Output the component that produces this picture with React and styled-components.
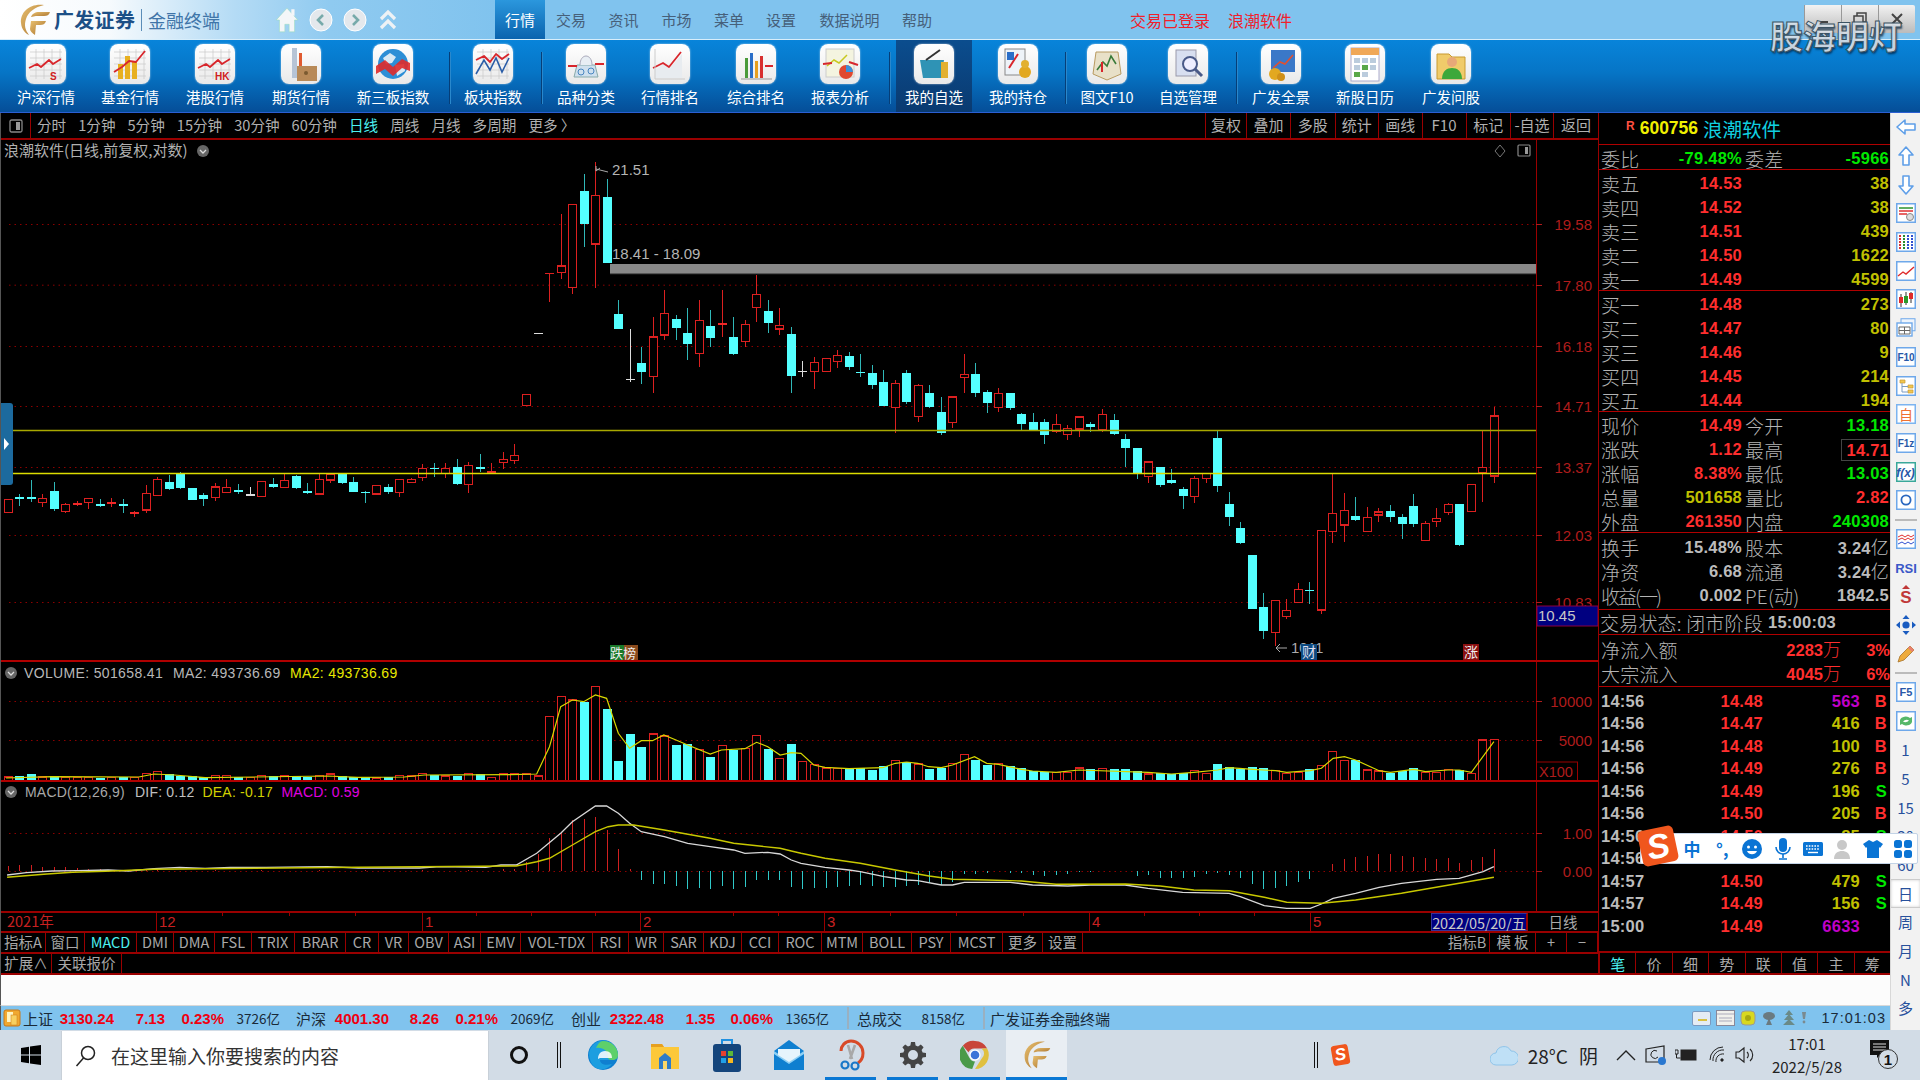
import React from 'react';
import styled, { createGlobalStyle } from 'styled-components';

const CJK = '"Noto Sans CJK SC", "Liberation Sans", sans-serif';
const LAT = '"Liberation Sans", "Noto Sans CJK SC", sans-serif';
const LINE = '#9a0000';

const Global = createGlobalStyle`
  html, body { margin: 0; padding: 0; background: #000; }
  * { box-sizing: border-box; }
`;

const Page = styled.div`
  position: relative; width: 1920px; height: 1080px; overflow: hidden;
  display: flex; flex-direction: column; font-family: ${LAT};
`;

/* ---------- top bar ---------- */
const TopBar = styled.header`
  height: 40px; flex: none; display: flex; align-items: stretch; background: #80c3ee;
  border-bottom: 1px solid #d8eefb;
`;
const LogoArea = styled.div`
  width: 495px; display: flex; align-items: center; padding-left: 18px;
  background: linear-gradient(90deg, #fff 0, #f6fafd 110px, #b4dbf5 235px, #8fcaf0 330px, #80c3ee 495px);
`;
const LogoName = styled.span`
  font: 700 20px ${CJK}; color: #1c4f86; margin-left: 2px; letter-spacing: .3px; width: 84px; white-space: nowrap;
`;
const LogoSub = styled.span`
  font: 400 18px ${CJK}; color: #3f75a8; border-left: 1px solid #5b8db8; padding-left: 6px; margin-left: 3px; line-height: 22px; white-space: nowrap;
`;
const NavIcons = styled.div`
  display: flex; gap: 10px; margin-left: 55px; align-items: center;
`;
const NavItem = styled.div`
  width: ${p => p.$w}px; display: flex; align-items: center; justify-content: center;
  font: 400 15px ${CJK}; color: ${p => (p.$on ? '#fff' : '#46607a')};
  background: ${p => (p.$on ? 'linear-gradient(180deg,#2b97dd,#0a63ae)' : 'none')};
`;
const LoginText = styled.span`
  font: 400 16px ${CJK}; color: #f0202a; align-self: center; white-space: nowrap; margin-left: ${p => p.$m}px;
`;
const WinControls = styled.div`
  position: absolute; top: 5px; left: 1804px; width: 111px; height: 28px; display: flex;
  background: linear-gradient(180deg, #f2f2f2, #bbb); border-radius: 2px;
`;
const WinBtn = styled.div`
  flex: 1; border-left: 1px solid #999; display: flex; align-items: center; justify-content: center;
`;
const Watermark = styled.div`
  position: absolute; top: 11px; left: 1770px; font: 700 33px ${CJK}; color: rgba(226,232,238,.88);
  letter-spacing: 0; white-space: nowrap;
  -webkit-text-stroke: 1px #3b5363; text-shadow: 1px 2px 2px rgba(0,30,60,.7);
`;

/* ---------- tool bar ---------- */
const ToolBar = styled.nav`
  height: 73px; flex: none; display: flex; padding-left: 4px;
  background: linear-gradient(180deg, #0884da 0, #0675c6 45%, #054e98 100%);
  border-bottom: 1px solid #2b5fd2;
`;
const Tool = styled.div`
  width: ${p => p.$w}px; display: flex; flex-direction: column; align-items: center; padding-top: 4px;
  background: ${p => (p.$on ? 'linear-gradient(180deg,#0b4d8e,#0a3a70)' : 'none')};
`;
const ToolTile = styled.div`
  width: 40px; height: 40px; border-radius: 8px; background: linear-gradient(180deg,#fff,#e9e9e9);
  box-shadow: 0 0 2px rgba(255,255,255,.7); overflow: hidden; display: flex;
`;
const ToolLabel = styled.span`
  margin-top: 3px; font: 400 14.5px/20px ${CJK}; color: #fff; white-space: nowrap;
`;
const ToolSep = styled.div`
  width: 1px; flex: none; margin: 12px ${p => p.$r}px 8px ${p => p.$l}px; background: #053e78; box-shadow: 1px 0 0 #2a88cc;
`;

/* ---------- body ---------- */
const Body = styled.div`
  flex: 1; display: flex; min-height: 0;
`;
const Workspace = styled.div`
  width: 1890px; display: flex; flex-direction: column;
`;
const Terminal = styled.div`
  height: 862px; flex: none; display: flex; background: #000; border-left: 1px solid #555;
`;
const ChartCol = styled.div`
  position: relative; width: 1597px; display: flex; flex-direction: column; border-bottom: 2px solid ${LINE};
`;
const PeriodBar = styled.div`
  height: 27px; flex: none; display: flex; align-items: stretch; border-bottom: 2px solid ${LINE};
`;
const PaneToggle = styled.div`
  width: 30px; border-right: 1px solid ${LINE}; display: flex; align-items: center; justify-content: center;
`;
const PeriodList = styled.div`
  display: flex; gap: 12px; padding: 0 0 2px 6px; align-items: center;
`;
const Period = styled.span`
  font: 400 14.6px ${CJK}; color: ${p => (p.$on ? '#4cf0f0' : '#b0b0b0')}; white-space: nowrap;
`;
const Actions = styled.div`
  margin-left: auto; display: flex;
`;
const ActionCell = styled.div`
  width: ${p => p.$w}px; border-left: 1px solid ${LINE}; display: flex; align-items: center; justify-content: center; padding-bottom: 2px;
  font: 400 15px ${CJK}; color: #b0b0b0; white-space: nowrap;
`;
const Pane = styled.div`
  height: ${p => p.$h}px; flex: none; display: flex;
`;
const Handle = styled.div`
  position: absolute; left: 0; top: 290px; width: 12px; height: 82px; background: #1c6a9e; border-radius: 0 3px 3px 0;
  display: flex; align-items: center; justify-content: flex-start; padding-left: 3px;
`;
const HandleArrow = styled.span`
  width: 0; height: 0; border-left: 5px solid #fff; border-top: 6px solid transparent; border-bottom: 6px solid transparent;
`;
const DateRow = styled.div`
  height: 20px; flex: none; display: flex; border-top: 2px solid ${LINE};
`;
const DateCell = styled.div`
  width: 97px; background: #000080; border: 1px solid #33339a; border-right: 2px solid ${LINE}; display: flex; align-items: center; justify-content: center;
  font: 400 14.5px ${CJK}; color: #c8c8c8; white-space: nowrap; letter-spacing: -.2px;
`;
const DayCell = styled.div`
  flex: 1; display: flex; align-items: center; justify-content: center; font: 400 14.5px ${CJK}; color: #aaa; padding-bottom: 1px;
`;
const CellRow = styled.div`
  height: ${p => p.$h}px; flex: none; display: flex; border-top: 2px solid ${LINE};
`;
const Cell = styled.div`
  width: ${p => p.$w}px; flex: none; border-right: 1px solid ${LINE}; display: flex; align-items: center; justify-content: center; padding-bottom: 2px;
  font: 400 14.5px ${CJK}; color: ${p => (p.$on ? '#4cf0f0' : '#a8a8a8')}; white-space: nowrap;
  ${p => p.$push && 'margin-left: auto;'}
`;

/* ---------- quote panel ---------- */
const Quote = styled.aside`
  width: 292px; flex: none; display: flex; flex-direction: column; border-left: 1px solid ${LINE}; border-bottom: 2px solid ${LINE};
`;
const QuoteHead = styled.div`
  height: 32px; flex: none; display: flex; align-items: center; padding-left: 27px; border-bottom: 1px solid #b00000;
`;
const RBadge = styled.span`
  font: 700 12px ${LAT}; color: #ff5040; align-self: flex-start; margin-top: 6px;
`;
const Code = styled.span`
  font: 700 17.5px ${LAT}; color: #f0f000; margin-left: 5px;
`;
const StockName = styled.span`
  font: 400 19.5px ${CJK}; color: #10d0e0; margin-left: 5px;
`;
const Section = styled.div`
  display: flex; flex-direction: column; flex: none; border-bottom: 1px solid #b00000;
  padding-top: ${p => p.$pt || 0}px; padding-bottom: ${p => p.$pb || 0}px;
`;
const Row = styled.div`
  height: 24px; display: grid; grid-template-columns: 144px 147px;
`;
const Half = styled.div`
  display: flex; align-items: center; justify-content: space-between; padding: 0 1px 0 2px;
`;
const Label = styled.span`
  font: 300 19px ${CJK}; color: #b4b4b4; white-space: nowrap; letter-spacing: ${p => (p.$tight ? '-2px' : '.2px')};
`;
const Num = styled.span`
  font: 700 16.5px ${LAT}; color: ${p => p.$c}; white-space: nowrap; letter-spacing: .25px;
  ${p => p.$box && 'border: 1px solid #444; padding: 0 1px 0 4px; margin: -1px -2px -1px 0; line-height: 20px;'}
`;
const Unit = styled.span`
  font: 300 18px/18px ${CJK};
`;
const StateRow = styled.div`
  height: 24px; display: flex; align-items: center; padding-left: 1px; gap: 5px;
`;
const FlowRow = styled.div`
  height: 24px; display: grid; grid-template-columns: 96px 144px 49px; align-items: center; padding-left: 2px;
`;
const FlowVal = styled.span`
  font: 700 16.5px/20px ${LAT}; color: #ff2e2e; text-align: right; white-space: nowrap;
`;
const Ticks = styled.div`
  flex: 1; padding-top: 3px; display: flex; flex-direction: column;
`;
const Tick = styled.div`
  height: 22.5px; flex: none; display: grid; grid-template-columns: 60px 102px 97px 27px; align-items: center; padding-left: 2px;
`;
const TickVal = styled.span`
  font: 700 16.5px ${LAT}; color: ${p => p.$c}; text-align: ${p => p.$a || 'right'}; letter-spacing: .25px; white-space: nowrap;
`;
const QuoteTabs = styled.div`
  height: 22px; flex: none; display: flex; border-top: 2px solid ${LINE};
`;
const QuoteTab = styled.div`
  flex: 1; display: flex; align-items: center; justify-content: center; border-left: 1px solid ${LINE};
  font: 400 15px ${CJK}; color: ${p => (p.$on ? '#4cf0f0' : '#aaa')};
`;

/* ---------- sidebar ---------- */
const Sidebar = styled.aside`
  width: 30px; flex: none; background: #f2f2f2; display: flex; flex-direction: column; align-items: center; border-left: 1px solid #d8d8d8;
`;
const SideItem = styled.div`
  width: 100%; height: 28.7px; flex: none; display: flex; align-items: center; justify-content: center;
  font: 400 ${p => p.$fs || 14}px ${CJK}; color: #27509c;
  ${p => p.$on && 'background:#fff;border:1px solid #ccc;border-width:1px 0;box-shadow:inset 0 0 3px #ccc;'}
`;
const SideSep = styled.div`
  width: 22px; height: 10px; flex: none; display: flex; align-items: center; &::before { content: ''; width: 100%; height: 2px; background: #bbb; }
`;

/* ---------- lower bands ---------- */
const Blank = styled.div`
  height: 31px; flex: none; background: #fcfcfc; border-left: 1px solid #555; border-bottom: 1px solid #d8d8d8;
`;
const StatusBar = styled.footer`
  height: 24px; flex: none; background: #80c3ee; display: flex; align-items: center; padding-left: 2px;
  border-left: 1px solid #555;
`;
const StatusName = styled.span`
  font: 400 15px ${CJK}; color: #1a2a38; margin-left: ${p => p.$m}px; white-space: nowrap;
`;
const StatusNum = styled.span`
  font: 700 15px ${LAT}; color: #f00010; width: ${p => p.$w}px; text-align: right; flex: none; white-space: nowrap;
`;
const StatusAmt = styled.span`
  font: 400 13.5px ${CJK}; color: #1a2a38; width: ${p => p.$w}px; text-align: right; flex: none; white-space: nowrap;
`;
const StatusSep = styled.span`
  width: 2px; height: 22px; background: #9ab0c0; margin: 0 ${p => p.$r}px 0 ${p => p.$l}px; flex: none;
`;
const StatusRight = styled.div`
  margin-left: auto; display: flex; align-items: center; gap: 5px; padding-right: 4px;
`;
const Clock = styled.span`
  font: 400 14.5px ${LAT}; color: #1a2a38; letter-spacing: 1px; margin-left: 10px;
`;

/* ---------- task bar ---------- */
const TaskBar = styled.div`
  height: 50px; flex: none; background: #d2dce6; display: flex; align-items: stretch;
`;
const StartBtn = styled.div`
  width: 61px; display: flex; align-items: center; justify-content: center; flex: none;
`;
const SearchBox = styled.div`
  width: 428px; flex: none; background: #fff; margin-top: 1px; display: flex; align-items: center; padding-left: 12px; gap: 13px;
  border: 1px solid #c8d0d8; border-width: 0 1px;
`;
const SearchText = styled.span`
  font: 400 19px ${CJK}; color: #333; white-space: nowrap;
`;
const TaskIcon = styled.div`
  position: relative; width: ${p => p.$w}px; flex: none; margin-left: ${p => p.$m || 0}px; display: flex; align-items: center; justify-content: center;
  ${p => p.$u && `&::after { content: ''; position: absolute; bottom: 0; height: 3px; background: #0a78d4; left: ${p.$on ? 0 : 5}px; right: ${p.$on ? 0 : 6}px; }`}
  ${p => p.$on && 'background: #e9eef3;'}
`;
const Tray = styled.div`
  margin-left: auto; display: flex; align-items: center;
`;
const Weather = styled.span`
  font: 400 19px ${CJK}; color: #222; white-space: nowrap; margin-left: ${p => p.$l}px;
`;
const TrayClock = styled.div`
  width: 94px; display: flex; flex-direction: column; align-items: center; font: 400 15px/23px ${CJK}; color: #222; margin-left: 5px;
`;
const Ime = styled.div`
  position: absolute; left: 1640px; top: 833px; width: 278px; height: 31px; background: #fff; border: 1px solid #c3d3e6; border-radius: 2px;
  display: flex; align-items: center; padding-left: 36px;
`;
const ImeLogo = styled.div`
  position: absolute; left: -1px; top: -6px; width: 36px; height: 36px; background: #f0561d; border-radius: 5px; transform: rotate(-12deg);
  display: flex; align-items: center; justify-content: center; font: italic 900 34px/34px ${LAT}; color: #fff;
`;
const ImeSlot = styled.div`
  width: 30.2px; flex: none; display: flex; justify-content: center; align-items: center; font: 700 17px ${CJK}; color: #0a74d4;
`;
const MiniS = styled.div`
  width: 17px; height: 20px; background: #f0561d; border-radius: 3px; transform: rotate(-10deg); color: #fff; font: italic 900 17px/20px ${LAT}; text-align: center;
`;

/* ---------- candle data [type, wickTop, bodyTop, bodyBottom, wickBottom] (zoomed y) ---------- */
const A = `r 1078 1078 1118 1118|c 1063 1070 1077 1097|c 1021 1070 1078 1085|r 1063 1075 1088 1100|c 1025 1052 1107 1112|r 1090 1094 1114 1118|R 1082 1090 1095 1097|r 1074 1076 1088 1107|c 1078 1092 1098 1102|R 1075 1086 1092 1100|c 1078 1092 1097 1118|R 1112 1115 1122 1130|r 1036 1060 1110 1118|r 1010 1018 1066 1068|c 1005 1025 1047 1050|c 995 1002 1043 1047|c 1044 1044 1080 1080|c 1060 1064 1077 1097|r 1030 1041 1073 1082|r 1018 1042 1057 1060|c 1032 1050 1055 1063|w 1040 1063 1067 1067|r 1025 1025 1070 1070|c 1015 1032 1040 1045|r 1002 1022 1043 1045|c 1004 1007 1043 1046|c 1030 1052 1058 1062|r 1002 1018 1062 1063|r 1000 1004 1020 1028|c 1000 1002 1028 1032|c 1012 1025 1055 1055|c 1052 1056 1060 1088|r 1037 1037 1062 1062|c 1033 1040 1055 1063|r 1018 1018 1058 1070|r 1015 1018 1027 1030|r 972 985 1013 1022|c 968 984 988 1010|r 968 985 1000 1014|c 958 980 1032 1035|r 965 977 1034 1058|c 942 981 988 995|R 968 993 1000 1000|r 936 958 968 987|r 912 947 961 972|r 763 763 796 796|w 580 579 581 581|R 400 400 402 485|r 222 378 397 417|r 193 193 443 462|c 102 152 252 320|r 65 167 312 443|c 118 170 368 368|c 480 523 567 568|w 568 716 718 727|c 622 669 695 732|r 530 591 709 758|r 450 520 585 600|c 525 538 563 600|c 503 580 612 660|r 480 542 640 682|c 510 557 593 620|R 450 549 556 592|c 530 590 642 645|r 540 553 604 622|r 405 463 502 547|c 480 512 548 578|r 503 557 567 585|c 560 583 708 758`;
const B = `w 362 394 396 410|r 350 367 394 447|r 355 355 395 395|r 330 347 364 385|c 335 347 380 390|c 343 396 399 410|c 376 399 435 447|c 390 425 497 497|r 420 430 502 578|c 390 399 485 492|r 432 437 530 545|c 435 460 500 505|c 470 516 578 585|r 468 471 548 565|r 343 403 413 458|c 368 403 458 470|c 450 455 488 518|r 445 460 503 515|c 460 460 503 510|c 520 522 553 570|c 518 545 570 570|c 538 545 585 612|r 522 553 574 578|r 555 565 584 600|r 530 531 567 590|c 545 553 560 575|r 507 523 570 575|c 522 541 582 585|c 582 598 624 680|c 624 624 700 717|r 665 666 710 728|c 680 680 736 740|c 687 721 728 732|c 740 748 769 807|r 708 715 770 788|r 700 700 716 728|c 570 594 738 755|c 755 793 830 857|c 845 865 908 912|c 946 946 1108 1108|c 1060 1100 1174 1197|r 1082 1082 1178 1218|r 1078 1112 1130 1137|r 1030 1048 1088 1090|c 1025 1050 1054 1092|r 870 872 1110 1122|r 700 820 874 908|r 760 812 855 905|c 770 827 841 842|r 800 832 874 875|r 805 816 825 845|c 796 812 830 845|c 822 831 852 897|c 762 797 851 862|r 842 851 901 902|r 805 835 845 862|r 790 793 818 825|c 793 793 916 918|r 733 733 815 815|r 570 682 697 785|r 500 528 708 728`;
const parse = (s, off) => s.split('|').map(e => {
  const p = e.split(' ');
  return { t: p[0], wt: p[1] / 3 + off, bt: p[2] / 3 + off, bb: p[3] / 3 + off, wb: p[4] / 3 + off };
});
const CANDLES = [...parse(A, 0), ...parse(B, 100)];
const xAt = i => 6.6 + 11.52 * i;

const VOL = [381,377,372,381,378,383,383,383,383,383,382,383,370,365,372,377,378,382,376,376,382,383,377,378,378,377,382,377,372,378,382,382,384,380,377,378,370,375,378,378,370,373,382,370,371,372,378,200,140,150,155,110,178,334,252,290,252,258,286,283,298,320,287,300,296,256,297,325,283,335,343,354,355,355,355,360,347,332,337,342,358,355,340,313,330,345,340,347,355,363,366,367,368,354,358,355,358,358,362,372,368,373,370,362,370,343,350,358,350,355,362,370,368,358,347,305,332,330,360,363,368,362,355,367,367,358,360,370,270,268];

const MA_L = [[10,384],[100,380],[270,381],[300,372],[340,375],[400,383],[640,378],[700,382],[790,381],[830,375],[1000,374],[1050,372],[1075,290],[1097,170],[1120,150],[1142,155],[1165,135],[1187,145],[1210,250],[1232,295],[1255,272],[1277,272],[1299,255],[1323,270],[1346,285],[1390,312],[1412,300],[1458,296],[1481,277],[1503,290],[1527,315],[1549,308]];
const MA_R = [[0,310],[25,345],[47,352],[94,356],[160,353],[185,340],[207,336],[229,340],[250,350],[275,353],[297,345],[340,320],[364,340],[387,343],[432,358],[454,363],[500,367],[545,360],[680,367],[726,372],[770,367],[817,360],[839,353],[886,358],[930,362],[952,367],[998,362],[1020,355],[1043,325],[1065,320],[1087,330],[1133,362],[1155,367],[1201,358],[1224,365],[1268,360],[1290,360],[1314,367],[1358,275]];
const DIF_L = [[12,675],[50,668],[100,663],[150,662],[210,660],[250,663],[300,656],[350,652],[400,655],[450,652],[520,652],[640,650],[700,654],[820,654],[860,650],[950,652],[980,645],[1010,645],[1050,610],[1097,550],[1120,515],[1165,468],[1187,468],[1210,490],[1232,520],[1255,545],[1300,560],[1346,580],[1390,590],[1436,600],[1458,610],[1503,607],[1527,612],[1549,630]];
const DIF_R = [[0,640],[47,652],[94,660],[116,665],[163,680],[207,690],[229,692],[275,705],[297,705],[320,697],[364,697],[410,697],[454,705],[523,708],[567,705],[635,705],[680,715],[748,727],[839,730],[861,740],[908,767],[952,775],[998,775],[1020,762],[1043,745],[1087,730],[1133,712],[1177,700],[1246,688],[1290,685],[1337,665],[1358,650]];
const DEA_L = [[12,682],[90,672],[140,667],[205,664],[300,658],[400,656],[700,652],[1010,648],[1050,635],[1075,625],[1120,585],[1165,545],[1190,530],[1210,525],[1240,525],[1300,540],[1390,565],[1436,580],[1527,595],[1549,603]];
const DEA_R = [[0,610],[47,625],[116,640],[185,660],[251,678],[297,688],[364,690],[432,693],[500,703],[636,702],[704,708],[770,720],[839,722],[908,742],[952,757],[1020,760],[1087,750],[1177,730],[1290,700],[1358,682]];
const pts = (l, r, dy) => [...l.map(([x, y]) => `${(x / 1.96).toFixed(1)},${(y / 3 + dy).toFixed(1)}`), ...r.map(([x, y]) => `${(800 + x / 1.96).toFixed(1)},${(y / 3 + dy).toFixed(1)}`)].join(' ');

const MACD_BARS = [
  [0,648],[1,645],[2,645],[3,650],[4,652],[5,650],[6,655],[7,657],[8,658],[9,660],[10,660],[11,661],[12,660],[13,660],[18,660],[22,660],[27,660],[31,660],[36,659],[40,660],[43,658],[44,657],
  [45,635],[46,612],[47,565],[48,550],[49,510],[50,508],[51,500],[52,540],[53,597],[54,658],
  [55,690],[56,703],[57,702],[58,707],[59,717],[60,713],[61,717],[62,708],[63,717],[64,710],[65,691],[66,691],[67,690],[68,710],
  [69,717],[70,715],[71,715],[72,710],[73,707],[74,705],[75,708],[76,710],[77,712],[78,707],[79,705],[80,697],[81,705],[82,695],[83,673],[84,673],[85,670],[87,668],[88,670],[89,675],[90,678],[91,675],[92,672],[93,667],[94,665],[98,677],[99,676],[100,683],[101,683],[102,683],[103,680],[104,672],[105,668],[106,675],[107,683],[108,703],[109,717],[110,715],[111,708],[112,695],[113,688],
  [115,642],[116,628],[117,620],[118,617],[119,613],[120,613],[121,617],[122,620],[123,625],[124,628],[125,625],[126,640],[127,630],[128,620],[129,598],
];

const RED = '#dc2020';
const CYAN = '#54ffff';
const AX = '#b01c1c';

const Grid = ({ ys }) => ys.map(y => (
  <line key={y} x1="8" x2="1535" y1={y + .5} y2={y + .5} stroke="#8c0000" strokeDasharray="1.5 4" />
));
const AxisMark = ({ y, t }) => (
  <g>
    <line x1="1535" x2="1541" y1={y + .5} y2={y + .5} stroke={AX} />
    <text x="1591" y={y + 5.5} textAnchor="end" fontSize="15" fill={AX} fontFamily={LAT}>{t}</text>
  </g>
);
const Chev = ({ x, y }) => (
  <g>
    <circle cx={x} cy={y} r="6" fill="#666" />
    <path d={`M${x - 3} ${y - 1}l3 3 3-3`} fill="none" stroke="#ddd" strokeWidth="1.3" />
  </g>
);

function Candle({ c, i }) {
  const x = Math.round(xAt(i));
  const col = c.t === 'c' ? '#2fb8b8' : c.t === 'w' ? '#ddd' : RED;
  const h = Math.max(1, c.bb - c.bt);
  return (
    <g shapeRendering="crispEdges">
      <line x1={x + .5} x2={x + .5} y1={c.wt} y2={c.wb} stroke={col} />
      {c.t === 'c' && <rect x={x - 4} y={c.bt} width="9" height={h} fill={CYAN} />}
      {c.t === 'r' && <rect x={x - 3.5} y={c.bt} width="8" height={h} fill="#000" stroke={RED} strokeWidth="1.2" />}
      {c.t === 'R' && <rect x={x - 4} y={c.bt} width="9" height={h} fill={i === 47 ? RED : '#f02828'} />}
      {c.t === 'w' && <rect x={x - 4} y={c.bt} width="9" height={h} fill="#ddd" />}
    </g>
  );
}

function MainChart() {
  return (
    <svg width="1597" height="522" viewBox="0 0 1597 522" style={{ display: 'block' }}>
      <Grid ys={[84, 144.7, 206, 266, 327, 395, 462]} />
      <rect x="609" y="124" width="926" height="10" fill="#888" />
      <rect x="609" y="133" width="926" height="1.2" fill="#555" />
      {CANDLES.map((c, i) => <Candle key={i} c={c} i={i} />)}
      <line x1="12" x2="1535" y1="290.5" y2="290.5" stroke="#a8a800" strokeWidth="1.3" />
      <line x1="12" x2="1535" y1="333.5" y2="333.5" stroke="#dcdc00" strokeWidth="1.3" />
      <path d="M595 29l12 3M595 26v5l4-3" fill="none" stroke="#aaa" />
      <text x="611" y="35" fontSize="15" fill="#b4b4b4" fontFamily={LAT}>21.51</text>
      <text x="611" y="119" fontSize="15" fill="#b4b4b4" fontFamily={LAT}>18.41 - 18.09</text>
      <text x="3" y="16" fontSize="15" fill="#b0b0b0" fontFamily={CJK}>浪潮软件(日线,前复权,对数)</text>
      <Chev x="202" y="11" />
      <path d="M1499 5l5 6-5 6-5-6z" fill="none" stroke="#777" />
      <rect x="1517" y="5" width="12" height="11" rx="1" fill="none" stroke="#888" strokeWidth="1.2" />
      <rect x="1524" y="7" width="3" height="7" fill="#999" />
      <line x1="1535.5" x2="1535.5" y1="0" y2="522" stroke={LINE} />
      <AxisMark y={84} t="19.58" />
      <AxisMark y={145} t="17.80" />
      <AxisMark y={206} t="16.18" />
      <AxisMark y={266} t="14.71" />
      <AxisMark y={327} t="13.37" />
      <AxisMark y={395} t="12.03" />
      <AxisMark y={462} t="10.83" />
      <rect x="1536" y="466" width="61" height="20" fill="#000080" stroke="#8a0040" />
      <text x="1537" y="481" fontSize="15" fill="#c8c8c8" fontFamily={LAT}>10.45</text>
      <rect x="609" y="505" width="14" height="15" fill="#1a7a2a" />
      <rect x="623" y="505" width="14" height="15" fill="#8a4a1c" />
      <text x="609" y="517.5" fontSize="13" fill="#eee" fontFamily={CJK}>跌榜</text>
      <path d="M1286 508h-11m4-4l-4 4 4 4" fill="none" stroke="#aaa" />
      <text x="1290" y="513" fontSize="15" fill="#aaa" fontFamily={LAT}>1011</text>
      <rect x="1300" y="504" width="16" height="16" fill="#0c4a80" />
      <text x="1301" y="517" fontSize="14" fill="#dde" fontFamily={CJK}>财</text>
      <rect x="1462" y="504" width="16" height="16" fill="#8a1010" />
      <text x="1463" y="517" fontSize="14" fill="#eee" fontFamily={CJK}>涨</text>
      <line x1="0" x2="1597" y1="521" y2="521" stroke="#b00000" strokeWidth="2" />
    </svg>
  );
}

function VolumeChart() {
  const dy = -12;
  return (
    <svg width="1597" height="120" viewBox="0 0 1597 120" style={{ display: 'block' }}>
      <Grid ys={[39, 78]} />
      <g shapeRendering="crispEdges">
        {VOL.map((v, i) => {
          const x = Math.round(xAt(i));
          const up = CANDLES[i].t !== 'c' && !(i === 54);
          const y = v / 3 + dy;
          return up
            ? <rect key={i} x={x - 3.5} y={y} width="8" height={119 - y} fill="#000" stroke={RED} strokeWidth="1.2" />
            : <rect key={i} x={x - 4} y={y} width="9" height={119 - y} fill={CYAN} />;
        })}
      </g>
      <polyline points={pts(MA_L, MA_R, dy)} fill="none" stroke="#d8d800" strokeWidth="1.2" />
      <Chev x="10" y="11" />
      <text y="16" fontSize="14" fill="#b8b8b8" letterSpacing=".35" fontFamily={LAT}>
        <tspan x="23">VOLUME: 501658.41</tspan>
        <tspan x="172">MA2: 493736.69</tspan>
        <tspan x="289" fill="#e8e800">MA2: 493736.69</tspan>
      </text>
      <line x1="1535.5" x2="1535.5" y1="0" y2="120" stroke={LINE} />
      <AxisMark y={39} t="10000" />
      <AxisMark y={78} t="5000" />
      <rect x="1535.5" y="100" width="41" height="19" fill="none" stroke={LINE} />
      <text x="1538" y="115" fontSize="14.5" fill={AX} fontFamily={LAT}>X100</text>
      <line x1="0" x2="1597" y1="119" y2="119" stroke="#b00000" strokeWidth="2" />
    </svg>
  );
}

function MacdChart() {
  const dy = -132;
  const zero = 663 / 3 + dy;
  return (
    <svg width="1597" height="129" viewBox="0 0 1597 129" style={{ display: 'block' }}>
      <Grid ys={[51, 89]} />
      <g shapeRendering="crispEdges">
        {MACD_BARS.map(([i, v]) => {
          const x = Math.round(xAt(i)) + .5;
          const y = v / 3 + dy;
          return <line key={i} x1={x} x2={x} y1={y} y2={zero} stroke={y < zero ? '#d02020' : '#30c8c8'} />;
        })}
      </g>
      <polyline points={pts(DIF_L, DIF_R, dy)} fill="none" stroke="#d8d8d8" strokeWidth="1.3" />
      <polyline points={pts(DEA_L, DEA_R, dy)} fill="none" stroke="#c8c800" strokeWidth="1.4" />
      <Chev x="10" y="10" />
      <text y="15" fontSize="14" fill="#a8a8a8" letterSpacing=".2" fontFamily={LAT}>
        <tspan x="24">MACD(12,26,9)</tspan>
        <tspan x="134" fill="#c0c0c0">DIF: 0.12</tspan>
        <tspan x="201.5" fill="#d0d000">DEA: -0.17</tspan>
        <tspan x="280.5" fill="#e000e0">MACD: 0.59</tspan>
      </text>
      <line x1="1535.5" x2="1535.5" y1="0" y2="129" stroke={LINE} />
      <AxisMark y={51} t="1.00" />
      <AxisMark y={89} t="0.00" />
    </svg>
  );
}

function DateAxis() {
  const majors = [[155, '12'], [421, '1'], [639, '2'], [823, '3'], [1088, '4'], [1309, '5']];
  const minors = [221, 288, 354, 475, 530, 594, 732, 777, 889, 955, 1022, 1143, 1198, 1253];
  return (
    <svg width="1430" height="18" viewBox="0 0 1430 18" style={{ display: 'block', flex: 'none', overflow: 'visible' }}>
      {minors.map(x => <line key={x} x1={x + .5} x2={x + .5} y1="0" y2="3" stroke={LINE} />)}
      <text x="6" y="13.5" fontSize="14.5" fill="#c82020" fontFamily={CJK}>2021年</text>
      {majors.map(([x, t]) => (
        <g key={t}>
          <line x1={x + .5} x2={x + .5} y1="0" y2="18" stroke={LINE} />
          <text x={x + 3} y="13.5" fontSize="15" fill="#c82020" fontFamily={LAT}>{t}</text>
        </g>
      ))}
    </svg>
  );
}

/* ---------- icons ---------- */
const GridBg = () => (
  <g stroke="#c8c8c8" strokeWidth=".7">
    {[8, 14, 20, 26, 32].map(y => <line key={y} x1="4" x2="36" y1={y} y2={y} />)}
    {[10, 18, 26, 34].map(x => <line key={x} x1={x} x2={x} y1="5" y2="35" />)}
  </g>
);
const RedL = ({ d }) => <path d={d} fill="none" stroke="#d8262c" strokeWidth="1.8" strokeLinejoin="round" />;
function ToolGlyph({ k }) {
  const g = {
    sz: <><GridBg /><RedL d="M3 24l8-4 4 3 8-7 4 4 8-5" /><text x="24" y="36" fontSize="10" fontWeight="700" fill="#d02020" fontFamily={LAT}>S</text></>,
    fund: <><GridBg /><g fill="#e8b020"><rect x="8" y="20" width="5" height="15" /><rect x="15" y="12" width="5" height="23" /><rect x="22" y="18" width="5" height="17" /></g><RedL d="M4 28l8-5 7-6 7 1 9-11" /></>,
    hk: <><GridBg /><RedL d="M3 24l8-4 4 3 8-7 4 4 8-5" /><text x="20" y="36" fontSize="10" fontWeight="700" fill="#d02020" fontFamily={LAT}>HK</text></>,
    fut: <><rect x="11" y="4" width="5" height="30" fill="#b6c4d6" /><rect x="18" y="9" width="3" height="18" fill="#e05a30" /><rect x="16" y="22" width="20" height="15" fill="#b88a58" /><circle cx="25" cy="29" r="2" fill="#7a5a30" /></>,
    globe: <><circle cx="20" cy="20" r="15" fill="#2c8ed6" /><path d="M10 14l7-5 6 4-4 6-6 1zM22 21l9-1 1 7-8 5z" fill="#d8e8f4" /><path d="M3 22l9-6 8 7 9-8 8 4v8l-8-3-9 8-8-7-9 5z" fill="#e02a2a" opacity=".9" /></>,
    plate: <><GridBg /><path d="M3 30l8-14 6 10 6-12 6 14 7-14" fill="none" stroke="#2c5ea8" strokeWidth="1.6" /><RedL d="M3 16l8-4 6 6 6-8 6 5 7-5" /></>,
    cat: <><path d="M8 33h24l-3-12H11z" fill="#cfe0ee" stroke="#8aa" /><path d="M14 21c0-12 12-12 12 0" fill="#e8eef4" stroke="#aab" /><circle cx="15" cy="28" r="3" fill="none" stroke="#4a86c0" /><circle cx="25" cy="27" r="3" fill="none" stroke="#4a86c0" /><path d="M2 22h9M29 20h9" stroke="#d8262c" strokeWidth="2" /></>,
    rank: <><path d="M5 26l9-6 6 4 12-14v24H5z" fill="#e8ecf0" /><RedL d="M3 24l10-5 6 4 12-15" /><path d="M5 5v30h30" fill="none" stroke="#ccc" /></>,
    all: <><rect x="9" y="14" width="3" height="20" fill="#4a9a3a" /><rect x="14" y="9" width="3" height="25" fill="#2a6ec8" /><rect x="19" y="17" width="3" height="17" fill="#e8a020" /><rect x="24" y="12" width="3" height="22" fill="#d83030" /><path d="M5 35h31" stroke="#999" /><path d="M29 22h8" stroke="#d8262c" strokeWidth="2" /></>,
    rep: <><rect x="6" y="5" width="28" height="28" fill="#f4f4e0" stroke="#ccc" /><path d="M7 22l7-6 5 3 8-8" stroke="#c8c820" fill="none" strokeWidth="1.5" /><path d="M3 20l9-1M29 18l9 3" stroke="#d8262c" strokeWidth="2" /><circle cx="26" cy="28" r="7" fill="#e04830" /><path d="M26 28V21a7 7 0 0 1 7 7z" fill="#3a90d8" /></>,
    basket: <><path d="M6 16h24l-3 18H9z" fill="#2f93b5" /><path d="M12 16l14-10" stroke="#333" strokeWidth="2" /><rect x="27" y="18" width="7" height="16" fill="#e2b030" /></>,
    hold: <><rect x="7" y="5" width="20" height="26" fill="#eef3f8" stroke="#888" /><path d="M11 24l9-14" stroke="#d8262c" strokeWidth="2" /><rect x="9" y="8" width="7" height="8" fill="#2a6ec8" /><circle cx="27" cy="28" r="6" fill="#e2a820" /><circle cx="27" cy="20" r="4" fill="#e2b030" /></>,
    f10: <><path d="M6 30l14 6 14-6-3-22H9z" fill="#e8e0c8" stroke="#b89a60" /><path d="M10 26l6-8 4 4 4-10 5 8" fill="none" stroke="#3a7a3a" strokeWidth="1.6" /><rect x="14" y="18" width="2" height="10" fill="#d8262c" /></>,
    mgr: <><rect x="8" y="6" width="20" height="26" fill="#d8dff0" stroke="#99a" /><circle cx="22" cy="20" r="7" fill="#eef" stroke="#4a5a88" strokeWidth="2" /><path d="M27 25l7 7" stroke="#4a5a88" strokeWidth="3" /></>,
    all2: <><rect x="10" y="6" width="24" height="22" fill="#3a78c8" /><path d="M12 24l7-6 5 2 8-9" stroke="#e05030" fill="none" strokeWidth="1.6" /><circle cx="14" cy="30" r="6" fill="#e2a820" /><circle cx="20" cy="33" r="4" fill="#d09018" /></>,
    cal: <><rect x="6" y="4" width="28" height="33" fill="#fff" stroke="#aac" /><rect x="6" y="4" width="28" height="7" fill="#f0a858" /><g fill="#bcd"><rect x="9" y="14" width="6" height="5" /><rect x="17" y="14" width="6" height="5" /><rect x="25" y="14" width="6" height="5" /><rect x="9" y="21" width="6" height="5" /><rect x="25" y="21" width="6" height="5" /></g><rect x="17" y="21" width="6" height="5" fill="#5aa848" /><rect x="9" y="28" width="6" height="5" fill="#5aa848" /><rect x="17" y="28" width="6" height="5" fill="#bcd" /></>,
    ask: <><path d="M6 10h12l3 3h13v22H6z" fill="#f0cb6a" stroke="#c89a30" /><circle cx="21" cy="18" r="5" fill="#e8a878" /><path d="M11 35c0-8 5-11 10-11s10 3 10 11z" fill="#3ca83a" /></>,
  };
  return <svg width="40" height="40" viewBox="0 0 40 40">{g[k]}</svg>;
}

const TOOLS = [
  ['沪深行情', 84, 'sz'], ['基金行情', 84, 'fund'], ['港股行情', 86, 'hk'], ['期货行情', 86, 'fut'], ['新三板指数', 98, 'globe'], { l: 7, r: 1 },
  ['板块指数', 84, 'plate'], { l: 6, r: 4 }, ['品种分类', 80, 'cat'], ['行情排名', 88, 'rank'], ['综合排名', 84, 'all'], ['报表分析', 84, 'rep'], { l: 7, r: 6 },
  ['我的自选', 76, 'basket', true], ['我的持仓', 92, 'hold'], { l: 1, r: 1 }, ['图文F10', 80, 'f10'], ['自选管理', 82, 'mgr'], { l: 7, r: 3 },
  ['广发全景', 82, 'all2'], ['新股日历', 86, 'cal'], ['广发问股', 86, 'ask'],
];

const Frame = ({ children, c = '#6ea8ea' }) => (
  <svg width="20" height="20" viewBox="0 0 20 20">
    <rect x=".75" y=".75" width="18.5" height="18.5" fill="#fff" stroke={c} strokeWidth="1.5" />
    {children}
  </svg>
);
const FT = ({ t, s = 10 }) => <text x="10" y="14" textAnchor="middle" fontSize={s} fontWeight="700" fill="#2858a8" fontFamily={LAT}>{t}</text>;
const BlueArrow = ({ d }) => (
  <svg width="20" height="20" viewBox="0 0 20 20"><path d={d} fill="#fff" stroke="#5f9fe8" strokeWidth="1.6" strokeLinejoin="round" /></svg>
);
const SIDE = [
  <BlueArrow d="M1 10l8-7v4h10v6H9v4z" />,
  <BlueArrow d="M10 1l7 8h-4v10H7V9H3z" />,
  <BlueArrow d="M10 19l7-8h-4V1H7v10H3z" />,
  <Frame><path d="M3 5h14" stroke="#3a9a3a" strokeWidth="1.6" /><path d="M3 8h14M3 11h8" stroke="#e03030" strokeWidth="1.6" /><circle cx="14" cy="14" r="3.5" fill="#ddd" stroke="#888" /></Frame>,
  <Frame><g stroke="#d83030" strokeWidth="2" strokeDasharray="2 1"><path d="M4 3v14" /></g><g stroke="#2a8a2a" strokeWidth="2" strokeDasharray="2 1"><path d="M8 3v14" /></g><g stroke="#3050d0" strokeWidth="2" strokeDasharray="2 1"><path d="M12 3v14M16 3v14" /></g></Frame>,
  <Frame><path d="M2 15l5-4 3 2 8-7" fill="none" stroke="#e02a2a" strokeWidth="1.4" /></Frame>,
  <Frame><path d="M5 5v13M10 3v13M15 3v11" stroke="#333" /><rect x="3" y="8" width="4" height="6" fill="#e02a2a" /><rect x="8" y="7" width="4" height="7" fill="#2a9a2a" /><rect x="13" y="4" width="4" height="6" fill="#e02a2a" /></Frame>,
  <svg width="20" height="20" viewBox="0 0 20 20"><rect x="5" y=".75" width="14" height="12" fill="#eef4fc" stroke="#6ea8ea" /><rect x="1" y="5" width="15" height="13" fill="#fff" stroke="#6ea8ea" strokeWidth="1.4" /><path d="M3 9h11v7H3zM3 12.5h11M8.5 9v7" fill="none" stroke="#666" /></svg>,
  <Frame><FT t="F10" /></Frame>,
  <Frame><path d="M4 4h5v3H4zM12 9h5v3h-5zM12 14h5v3h-5z" fill="#f2c850" stroke="#c89a30" strokeWidth=".7" /><path d="M6 7v9h6M6 10.5h6" fill="none" stroke="#7a9ac0" /></Frame>,
  <Frame c="#7cb4f0"><text x="10" y="15.5" textAnchor="middle" fontSize="14" fill="#f07030" fontFamily={CJK}>自</text></Frame>,
  <Frame><FT t="F1z" /></Frame>,
  <Frame c="#3aa89a"><text x="9.5" y="14.5" textAnchor="middle" fontSize="12" fontStyle="italic" fontWeight="700" fill="#2858a8" fontFamily={LAT}>f(x)</text></Frame>,
  <Frame><circle cx="10" cy="10" r="4.6" fill="none" stroke="#2a68c0" strokeWidth="1.8" /></Frame>,
  'sep',
  <Frame><path d="M2 8l4-2 3 2 3-2 3 2 3-2" fill="none" stroke="#e03030" /><path d="M2 11l4-2 3 2 3-2 3 2 3-2" fill="none" stroke="#e03030" /><path d="M2 15l4-2 3 2 3-2 3 2 3-2" fill="none" stroke="#3050d0" /></Frame>,
  <svg width="26" height="16" viewBox="0 0 26 16"><text x="13" y="13" textAnchor="middle" fontSize="13" fontWeight="700" fill="#3a58c8" fontFamily={LAT}>RSI</text></svg>,
  <svg width="20" height="22" viewBox="0 0 20 22"><text x="10" y="18" textAnchor="middle" fontSize="17" fontWeight="700" fill="#c03838" fontFamily={LAT}>S</text><path d="M10 0l4 4H6z" fill="#c03838" /></svg>,
  <svg width="22" height="22" viewBox="0 0 22 22" fill="#1a5cc0"><path d="M11 1l3.5 4h-7zM11 21l3.5-4h-7zM1 11l4-3.5v7zM21 11l-4-3.5v7z" /><circle cx="11" cy="11" r="3.6" /></svg>,
  <svg width="20" height="20" viewBox="0 0 20 20"><path d="M2 18l2-6L14 2l4 4L8 16z" fill="#eeab3c" stroke="#a8742a" strokeWidth=".8" /><path d="M14 2l4 4-2 2-4-4z" fill="#e88070" /></svg>,
  'sep',
  <Frame><FT t="F5" s="11" /></Frame>,
  <Frame><path d="M4 9a6 5 0 0 1 10-2l2-1v5h-5l2-1.5a4 3 0 0 0-6 1zM16 11a6 5 0 0 1-10 2l-2 1V9h5l-2 1.5a4 3 0 0 0 6-1z" fill="#56b86a" /></Frame>,
];
const SIDE_TXT = ['1', '5', '15', '30', '60'];

const SELL = [['卖五', '14.53', '38'], ['卖四', '14.52', '38'], ['卖三', '14.51', '439'], ['卖二', '14.50', '1622'], ['卖一', '14.49', '4599']];
const BUY = [['买一', '14.48', '273'], ['买二', '14.47', '80'], ['买三', '14.46', '9'], ['买四', '14.45', '214'], ['买五', '14.44', '194']];
const R = '#ff2e2e', G = '#00e800', Y = '#c0c000', W = '#bcbcbc', P = '#c000c8';
const STATS = [
  ['现价', '14.49', R, '今开', '13.18', G],
  ['涨跌', '1.12', R, '最高', '14.71', R, true],
  ['涨幅', '8.38%', R, '最低', '13.03', G],
  ['总量', '501658', Y, '量比', '2.82', R],
  ['外盘', '261350', R, '内盘', '240308', G],
];
const TICKS = [
  ['14:56', '14.48', '563', P, 'B'], ['14:56', '14.47', '416', Y, 'B'], ['14:56', '14.48', '100', Y, 'B'], ['14:56', '14.49', '276', Y, 'B'],
  ['14:56', '14.49', '196', Y, 'S'], ['14:56', '14.50', '205', Y, 'B'], ['14:56', '14.50', '85', Y, 'S'], ['14:56', '14.50', '61', Y, 'B'],
  ['14:57', '14.50', '479', Y, 'S'], ['14:57', '14.49', '156', Y, 'S'], ['15:00', '14.49', '6633', P, ''],
];

const PERIODS = ['分时', '1分钟', '5分钟', '15分钟', '30分钟', '60分钟', '日线', '周线', '月线', '多周期', '更多 〉'];
const ACTIONS = [['复权', 41], ['叠加', 44], ['多股', 44.5], ['统计', 43.5], ['画线', 43.5], ['F10', 44], ['标记', 44.5], ['-自选', 43], ['返回', 45]];
const IND = [['指标A', 45], ['窗口', 39], ['MACD', 52, 1], ['DMI', 37], ['DMA', 41], ['FSL', 37], ['TRIX', 43], ['BRAR', 51], ['CR', 33], ['VR', 30], ['OBV', 40], ['ASI', 32], ['EMV', 40], ['VOL-TDX', 72], ['RSI', 36], ['WR', 35], ['SAR', 40], ['KDJ', 38], ['CCI', 37], ['ROC', 43], ['MTM', 41], ['BOLL', 49], ['PSY', 39], ['MCST', 52], ['更多', 40], ['设置', 40]];
const IND_R = [['指标B', 45], ['模 板', 46], ['+', 31], ['−', 31]];

const GFLogo = ({ s = 34 }) => (
  <svg width={s} height={s} viewBox="0 0 34 34">
    <defs><linearGradient id="gf" x1="0" y1="0" x2="1" y2="1"><stop offset="0" stopColor="#e8c070" /><stop offset="1" stopColor="#a8702a" /></linearGradient></defs>
    <path d="M26 2C12 0 2 9 3 20c.5 6 4 10 8 12-4-5-5-10-3-16C10 9 17 4 26 2z" fill="url(#gf)" />
    <path d="M13 14c1-3 4-5 8-5h11c-1 3-3 4-6 4h-8c-2 0-3 1-5 1z" fill="url(#gf)" />
    <path d="M13 18h15c-1 3-3 4-6 4h-4l-1 10c-3-2-5-4-5-6z" fill="url(#gf)" />
  </svg>
);

export default function App() {
  return (
    <Page>
      <Global />
      <TopBar>
        <LogoArea>
          <GFLogo />
          <LogoName>广发证券</LogoName>
          <LogoSub>金融终端</LogoSub>
          <NavIcons>
            <svg width="24" height="28" viewBox="0 0 22 26"><path d="M11 2L1 13h3v11h5v-7h4v7h5V13h3z" fill="#f4f6f8" stroke="#9db" strokeWidth=".5" /><rect x="15" y="3" width="3" height="6" fill="#f4f6f8" /></svg>
            <svg width="24" height="24" viewBox="0 0 24 24"><circle cx="12" cy="12" r="11" fill="#e4e8ec" stroke="#fff" /><path d="M14 7l-5 5 5 5" fill="none" stroke="#7aa" strokeWidth="2.6" /></svg>
            <svg width="24" height="24" viewBox="0 0 24 24"><circle cx="12" cy="12" r="11" fill="#e4e8ec" stroke="#fff" /><path d="M10 7l5 5-5 5" fill="none" stroke="#7aa" strokeWidth="2.6" /></svg>
            <svg width="22" height="24" viewBox="0 0 22 24"><path d="M4 11l7-7 7 7M4 20l7-7 7 7" fill="none" stroke="#eef2f5" strokeWidth="3.2" /></svg>
          </NavIcons>
        </LogoArea>
        <NavItem $w={50} $on>行情</NavItem>
        <NavItem $w={52}>交易</NavItem>
        <NavItem $w={53}>资讯</NavItem>
        <NavItem $w={53}>市场</NavItem>
        <NavItem $w={52}>菜单</NavItem>
        <NavItem $w={52}>设置</NavItem>
        <NavItem $w={85}>数据说明</NavItem>
        <NavItem $w={50}>帮助</NavItem>
        <LoginText $m={188}>交易已登录</LoginText>
        <LoginText $m={18}>浪潮软件</LoginText>
      </TopBar>
      <WinControls>
        <WinBtn><svg width="12" height="12" viewBox="0 0 12 12"><path d="M1 9h10" stroke="#444" strokeWidth="2" /></svg></WinBtn>
        <WinBtn><svg width="14" height="14" viewBox="0 0 14 14" fill="none" stroke="#444" strokeWidth="1.5"><rect x="1" y="4" width="9" height="9" /><path d="M4 4V1h9v9h-3" /></svg></WinBtn>
        <WinBtn><svg width="12" height="12" viewBox="0 0 12 12"><path d="M1 1l10 10M11 1L1 11" stroke="#444" strokeWidth="2" /></svg></WinBtn>
      </WinControls>

      <ToolBar>
        {TOOLS.map((t, i) => (Array.isArray(t)
          ? (
            <Tool key={i} $w={t[1]} $on={t[3]}>
              <ToolTile><ToolGlyph k={t[2]} /></ToolTile>
              <ToolLabel>{t[0]}</ToolLabel>
            </Tool>
          )
          : <ToolSep key={i} $l={t.l} $r={t.r} />))}
      </ToolBar>

      <Body>
        <Workspace>
          <Terminal>
            <ChartCol>
              <PeriodBar>
                <PaneToggle>
                  <svg width="14" height="14" viewBox="0 0 14 14"><rect x="1" y="1" width="12" height="12" rx="1.5" fill="none" stroke="#888" strokeWidth="1.3" /><rect x="7" y="3" width="4" height="8" fill="#999" /></svg>
                </PaneToggle>
                <PeriodList>
                  {PERIODS.map(p => <Period key={p} $on={p === '日线'}>{p}</Period>)}
                </PeriodList>
                <Actions>
                  {ACTIONS.map(([t, w]) => <ActionCell key={t} $w={w}>{t}</ActionCell>)}
                </Actions>
              </PeriodBar>
              <Pane $h={522}><MainChart /></Pane>
              <Pane $h={120}><VolumeChart /></Pane>
              <Pane $h={129}><MacdChart /></Pane>
              <DateRow>
                <DateAxis />
                <DateCell>2022/05/20/五</DateCell>
                <DayCell>日线</DayCell>
              </DateRow>
              <CellRow $h={21}>
                {IND.map(([t, w, on]) => <Cell key={t} $w={w} $on={on}>{t}</Cell>)}
                {IND_R.map(([t, w], i) => <Cell key={t} $w={w} $push={i === 0}>{t}</Cell>)}
              </CellRow>
              <CellRow $h={21}>
                <Cell $w={51}>扩展∧</Cell>
                <Cell $w={70}>关联报价</Cell>
              </CellRow>
              <Handle><HandleArrow /></Handle>
            </ChartCol>
            <Quote>
              <QuoteHead>
                <RBadge>R</RBadge>
                <Code>600756</Code>
                <StockName>浪潮软件</StockName>
              </QuoteHead>
              <Section>
                <Row><Half><Label>委比</Label><Num $c={G}>-79.48%</Num></Half><Half><Label>委差</Label><Num $c={G}>-5966</Num></Half></Row>
              </Section>
              <Section>
                {SELL.map(r => <Row key={r[0]}><Half><Label>{r[0]}</Label><Num $c={R}>{r[1]}</Num></Half><Half><span /><Num $c={Y}>{r[2]}</Num></Half></Row>)}
              </Section>
              <Section>
                {BUY.map(r => <Row key={r[0]}><Half><Label>{r[0]}</Label><Num $c={R}>{r[1]}</Num></Half><Half><span /><Num $c={Y}>{r[2]}</Num></Half></Row>)}
              </Section>
              <Section>
                {STATS.map(r => (
                  <Row key={r[0]}>
                    <Half><Label>{r[0]}</Label><Num $c={r[2]}>{r[1]}</Num></Half>
                    <Half><Label>{r[3]}</Label><Num $c={r[5]} $box={r[6]}>{r[4]}</Num></Half>
                  </Row>
                ))}
              </Section>
              <Section $pt={1} $pb={3}>
                <Row><Half><Label>换手</Label><Num $c={W}>15.48%</Num></Half><Half><Label>股本</Label><Num $c={W}>3.24<Unit>亿</Unit></Num></Half></Row>
                <Row><Half><Label>净资</Label><Num $c={W}>6.68</Num></Half><Half><Label>流通</Label><Num $c={W}>3.24<Unit>亿</Unit></Num></Half></Row>
                <Row><Half><Label $tight>收益(一)</Label><Num $c={W}>0.002</Num></Half><Half><Label>PE(动)</Label><Num $c={W}>1842.5</Num></Half></Row>
              </Section>
              <Section>
                <StateRow><Label>交易状态: 闭市阶段</Label><Num $c={W}>15:00:03</Num></StateRow>
              </Section>
              <Section $pt={1} $pb={2}>
                <FlowRow><Label>净流入额</Label><FlowVal>2283<Unit>万</Unit></FlowVal><FlowVal>3%</FlowVal></FlowRow>
                <FlowRow><Label>大宗流入</Label><FlowVal>4045<Unit>万</Unit></FlowVal><FlowVal>6%</FlowVal></FlowRow>
              </Section>
              <Ticks>
                {TICKS.map((t, i) => (
                  <Tick key={i}>
                    <TickVal $c={W} $a="left">{t[0]}</TickVal>
                    <TickVal $c={R}>{t[1]}</TickVal>
                    <TickVal $c={t[3]}>{t[2]}</TickVal>
                    <TickVal $c={t[4] === 'S' ? G : R}>{t[4]}</TickVal>
                  </Tick>
                ))}
              </Ticks>
              <QuoteTabs>
                {['笔', '价', '细', '势', '联', '值', '主', '筹'].map((t, i) => <QuoteTab key={t} $on={i === 0}>{t}</QuoteTab>)}
              </QuoteTabs>
            </Quote>
          </Terminal>
          <Blank />
          <StatusBar>
            <svg width="18" height="18" viewBox="0 0 18 18" style={{ flex: 'none' }}><rect x="1" y="1" width="16" height="16" rx="2" fill="#f0a830" stroke="#c87818" /><rect x="4" y="3" width="6" height="10" fill="#fff4c0" /><rect x="8" y="6" width="6" height="10" fill="#f8d060" stroke="#c87818" strokeWidth=".5" /></svg>
            <StatusName $m={2}>上证</StatusName>
            <StatusNum $w={61}>3130.24</StatusNum><StatusNum $w={51}>7.13</StatusNum><StatusNum $w={59}>0.23%</StatusNum>
            <StatusAmt $w={56}>3726亿</StatusAmt>
            <StatusName $m={16}>沪深</StatusName>
            <StatusNum $w={63}>4001.30</StatusNum><StatusNum $w={50}>8.26</StatusNum><StatusNum $w={59}>0.21%</StatusNum>
            <StatusAmt $w={56}>2069亿</StatusAmt>
            <StatusName $m={17}>创业</StatusName>
            <StatusNum $w={63}>2322.48</StatusNum><StatusNum $w={51}>1.35</StatusNum><StatusNum $w={58}>0.06%</StatusNum>
            <StatusAmt $w={56}>1365亿</StatusAmt>
            <StatusSep $l={18} $r={8} />
            <StatusName $m={0}>总成交</StatusName>
            <StatusAmt $w={63}>8158亿</StatusAmt>
            <StatusSep $l={18} $r={5} />
            <StatusName $m={0}>广发证券金融终端</StatusName>
            <StatusRight>
              <svg width="19" height="15" viewBox="0 0 19 15"><rect x=".5" y=".5" width="18" height="14" rx="1.5" fill="#e4ecf4" stroke="#7a9ac0" /><rect x="6" y="8" width="9" height="2" fill="#d8c040" /></svg>
              <svg width="19" height="16" viewBox="0 0 19 16"><rect x=".5" y=".5" width="18" height="15" fill="#f0f0ec" stroke="#889" /><path d="M1 4h17M3 8h13M3 11h13" stroke="#aab" /></svg>
              <svg width="16" height="16" viewBox="0 0 16 16"><rect x="1" y="1" width="14" height="14" rx="4" fill="#d8d820" stroke="#999" /><circle cx="8" cy="8" r="3" fill="#a8a810" /></svg>
              <svg width="16" height="16" viewBox="0 0 16 16"><ellipse cx="8" cy="6" rx="6" ry="4" fill="#6a7a80" /><path d="M8 8l-3 7h6z" fill="#6a7a80" /></svg>
              <svg width="14" height="16" viewBox="0 0 14 16"><path d="M7 0l4 5H3zM7 4l5 6H2zM7 9l6 6H1z" fill="#6a8a88" /></svg>
              <svg width="6" height="14" viewBox="0 0 6 14"><path d="M1 1h4L4 8H2z" fill="#7a8a90" /><circle cx="3" cy="11" r="1.4" fill="#7a8a90" /></svg>
              <Clock>17:01:03</Clock>
            </StatusRight>
          </StatusBar>
        </Workspace>
        <Sidebar>
          {SIDE.map((s, i) => (s === 'sep'
            ? <SideSep key={i} />
            : <SideItem key={i}>{s}</SideItem>))}
          {SIDE_TXT.map(t => <SideItem key={t} $fs={15}>{t}</SideItem>)}
          <SideItem $on $fs={15}>日</SideItem>
          <SideItem $fs={15}>周</SideItem>
          <SideItem $fs={15}>月</SideItem>
          <SideItem $fs={15}>N</SideItem>
          <SideItem $fs={15}>多</SideItem>
        </Sidebar>
      </Body>

      <TaskBar>
        <StartBtn>
          <svg width="20" height="20" viewBox="0 0 20 20" fill="#000"><path d="M0 3l8-1.2V9.5H0zM9 1.6L20 0v9.5H9zM0 10.5h8v7.7L0 17zM9 10.5h11V20L9 18.4z" /></svg>
        </StartBtn>
        <SearchBox>
          <svg width="24" height="24" viewBox="0 0 24 24" fill="none" stroke="#222" strokeWidth="1.5"><circle cx="14" cy="9" r="6.5" /><path d="M9.5 14L2.5 22" /></svg>
          <SearchText>在这里输入你要搜索的内容</SearchText>
        </SearchBox>
        <TaskIcon $w={60}>
          <svg width="20" height="20" viewBox="0 0 20 20"><circle cx="10" cy="10" r="7.5" fill="none" stroke="#111" strokeWidth="3" /></svg>
        </TaskIcon>
        <TaskIcon $w={20}>
          <svg width="4" height="26" viewBox="0 0 4 26"><path d="M.5 0v26M3.5 0v26" stroke="#111" /></svg>
        </TaskIcon>
        <TaskIcon $w={62} $m={3}>
          <svg width="32" height="32" viewBox="0 0 32 32"><circle cx="16" cy="16" r="15" fill="#0f7fd0" /><path d="M2 14C4 4 13 0 20 2c6 2 11 7 11 14 0 3-3 5-8 5H13c0 4 5 6 12 4-3 4-8 6-13 5C6 29 2 22 2 14z" fill="#1c9ee0" /><path d="M16 2c8 0 15 6 15 14 0 3-2 5-6 5-3 0-4-1-4-3 0-6-5-10-12-9C11 5 13 2 16 2z" fill="#5ed06a" /><path d="M11 20c0-4 2-8 7-8s7 3 7 7H13z" fill="#fff" opacity=".85" /></svg>
        </TaskIcon>
        <TaskIcon $w={62}>
          <svg width="30" height="28" viewBox="0 0 30 28"><path d="M1 3h11l2 3h15v22H1z" fill="#fcc83a" /><path d="M1 3h11l2 3H1z" fill="#e6a020" /><path d="M9 28V17l6-5 6 5v11z" fill="#2f7cc8" /><rect x="13" y="20" width="4" height="8" fill="#fcd868" /></svg>
        </TaskIcon>
        <TaskIcon $w={62}>
          <svg width="30" height="34" viewBox="0 0 30 34"><path d="M10 6V2h10v4" fill="none" stroke="#2090e0" strokeWidth="2" /><rect x="1" y="6" width="28" height="28" rx="3" fill="#14457c" /><rect x="9" y="13" width="5" height="5" fill="#e84030" /><rect x="16" y="13" width="5" height="5" fill="#5cb838" /><rect x="9" y="20" width="5" height="5" fill="#20a0e8" /><rect x="16" y="20" width="5" height="5" fill="#f8b820" /></svg>
        </TaskIcon>
        <TaskIcon $w={62}>
          <svg width="32" height="30" viewBox="0 0 32 30"><path d="M1 11L16 0l15 11v19H1z" fill="#0f7fd0" /><path d="M1 11l15 10 15-10v3L16 24 1 14z" fill="#8fd0f4" /><path d="M5 9h22v6l-11 7-11-7z" fill="#e6f4fc" /></svg>
        </TaskIcon>
        <TaskIcon $w={62} $u>
          <svg width="30" height="32" viewBox="0 0 30 32"><path d="M15 2a12 12 0 0 1 12 12c0 4-2 8-5 10" fill="none" stroke="#d84a28" strokeWidth="3" /><path d="M15 2C9 2 5 7 5 12" fill="none" stroke="#d84a28" strokeWidth="3" /><path d="M12 6l4 14M19 6l-5 14" stroke="#a8a8a8" strokeWidth="2.6" /><circle cx="9" cy="26" r="3.5" fill="none" stroke="#1a78c8" strokeWidth="2.2" /><circle cx="19" cy="27" r="3.5" fill="none" stroke="#1a78c8" strokeWidth="2.2" /></svg>
        </TaskIcon>
        <TaskIcon $w={62} $u>
          <svg width="28" height="28" viewBox="0 0 28 28" fill="#444"><path d="M12 1h4l.6 3.4 2.4 1 2.8-2 2.8 2.8-2 2.8 1 2.4L27 12v4l-3.4.6-1 2.4 2 2.8-2.8 2.8-2.8-2-2.4 1L16 27h-4l-.6-3.4-2.4-1-2.8 2-2.8-2.8 2-2.8-1-2.4L1 16v-4l3.4-.6 1-2.4-2-2.8 2.8-2.8 2.8 2 2.4-1zM14 9a5 5 0 1 0 0 10 5 5 0 0 0 0-10z" fillRule="evenodd" /></svg>
        </TaskIcon>
        <TaskIcon $w={62} $u>
          <svg width="30" height="32" viewBox="0 0 32 32"><path d="M16 1a15 15 0 0 1 13 8H16a7 7 0 0 0-7 4L3 6a15 15 0 0 1 13-5z" fill="#c8453a" /><path d="M29 9a15 15 0 0 1-13 22l7-11a7 7 0 0 0 0-11z" fill="#e0c040" /><path d="M3 6l7 13a7 7 0 0 0 6 4l-3 8A15 15 0 0 1 3 6z" fill="#4a9a48" /><circle cx="16" cy="16" r="6" fill="#fff" /><circle cx="16" cy="16" r="4.6" fill="#3a74d8" /></svg>
        </TaskIcon>
        <TaskIcon $w={61} $m={0} $u $on>
          <GFLogo s={30} />
        </TaskIcon>
        <Tray>
          <svg width="4" height="26" viewBox="0 0 4 26"><path d="M.5 0v26M3.5 0v26" stroke="#111" /></svg>
          <TaskIcon $w={24} $m={11}><MiniS>S</MiniS></TaskIcon>
          <svg width="28" height="24" viewBox="0 0 28 24" style={{ marginLeft: 137 }}><path d="M6 22a6 6 0 0 1 0-12 8 8 0 0 1 15-2 7 7 0 0 1 1 14z" fill="#bfe0f6" stroke="#8ec4ea" /></svg>
          <Weather $l={10}>28°C</Weather>
          <Weather $l={11}>阴</Weather>
          <svg width="20" height="12" viewBox="0 0 20 12" style={{ marginLeft: 18 }}><path d="M1 11L10 2l9 9" fill="none" stroke="#222" strokeWidth="1.4" /></svg>
          <svg width="22" height="22" viewBox="0 0 22 22" style={{ marginLeft: 9 }}><path d="M1 5l18-3v16H1z" fill="none" stroke="#222" strokeWidth="1.2" /><path d="M12 7a4 4 0 1 0 1 6" fill="none" stroke="#222" /><circle cx="17" cy="17" r="4" fill="#2a78d0" /></svg>
          <svg width="22" height="14" viewBox="0 0 22 14" style={{ marginLeft: 8 }}><rect x="6" y="2" width="15" height="10" fill="#222" stroke="#222" /><path d="M0 2h3v4H0zM1.5 6v4h4" fill="none" stroke="#222" /></svg>
          <svg width="18" height="18" viewBox="0 0 18 18" style={{ marginLeft: 12 }} fill="none" stroke="#222"><path d="M1 14A13 13 0 0 1 14 1M4 15A10 10 0 0 1 15 4M7 16A7 7 0 0 1 15 8" /><circle cx="13" cy="14" r="1.2" fill="#222" /></svg>
          <svg width="20" height="18" viewBox="0 0 20 18" style={{ marginLeft: 8 }} fill="none" stroke="#222" strokeWidth="1.1"><path d="M1 6h3l5-4v14l-5-4H1zM12 6a4 4 0 0 1 0 6M15 3a8 8 0 0 1 0 12" /></svg>
          <TrayClock><span>17:01</span><span>2022/5/28</span></TrayClock>
          <svg width="34" height="34" viewBox="0 0 34 34" style={{ marginLeft: 14, marginRight: 18 }}>
            <path d="M2 2h19v15h-9l-3 3v-3H2z" fill="#111" /><path d="M5 6h13M5 9h13M5 12h13" stroke="#ddd" />
            <circle cx="20" cy="21" r="9.5" fill="#d2dce6" stroke="#333" />
            <text x="20" y="26.5" textAnchor="middle" fontSize="15" fontWeight="700" fill="#111" fontFamily={LAT}>1</text>
          </svg>
        </Tray>
      </TaskBar>

      <Watermark>股海明灯</Watermark>
      <Ime>
        <ImeLogo>S</ImeLogo>
        <ImeSlot>中</ImeSlot>
        <ImeSlot>°,</ImeSlot>
        <ImeSlot><svg width="20" height="20" viewBox="0 0 20 20"><circle cx="10" cy="10" r="10" fill="#0a74d4" /><circle cx="6.5" cy="8" r="1.5" fill="#fff" /><circle cx="13.5" cy="8" r="1.5" fill="#fff" /><path d="M5 12a5.5 5.5 0 0 0 10 0z" fill="#fff" /></svg></ImeSlot>
        <ImeSlot><svg width="16" height="22" viewBox="0 0 16 22" fill="#0a74d4"><rect x="4" y="0" width="8" height="14" rx="4" /><path d="M1 9a7 7 0 0 0 14 0" fill="none" stroke="#0a74d4" strokeWidth="1.6" /><path d="M8 16v4M4 21h8" stroke="#0a74d4" strokeWidth="1.6" /></svg></ImeSlot>
        <ImeSlot><svg width="20" height="14" viewBox="0 0 20 14"><rect width="20" height="14" rx="1.5" fill="#0a74d4" /><path d="M3 4h14M3 7h14" stroke="#fff" strokeWidth="1.4" strokeDasharray="1.6 1.2" /><path d="M5 10.5h10" stroke="#fff" strokeWidth="1.4" /></svg></ImeSlot>
        <ImeSlot><svg width="18" height="20" viewBox="0 0 18 20" fill="#c8c8c8"><circle cx="8" cy="6" r="5" /><path d="M0 20c0-6 4-8 8-8s8 2 8 8z" /></svg></ImeSlot>
        <ImeSlot><svg width="20" height="18" viewBox="0 0 20 18" fill="#0a74d4"><path d="M6 0l4 2 4-2 6 4-3 4-1-1v11H4V7L3 8 0 4z" /></svg></ImeSlot>
        <ImeSlot><svg width="18" height="18" viewBox="0 0 18 18" fill="#0a74d4"><rect width="8" height="8" rx="2.5" /><rect x="10" width="8" height="8" rx="2.5" /><rect y="10" width="8" height="8" rx="2.5" /><rect x="10" y="10" width="8" height="8" rx="2.5" /></svg></ImeSlot>
      </Ime>
    </Page>
  );
}
